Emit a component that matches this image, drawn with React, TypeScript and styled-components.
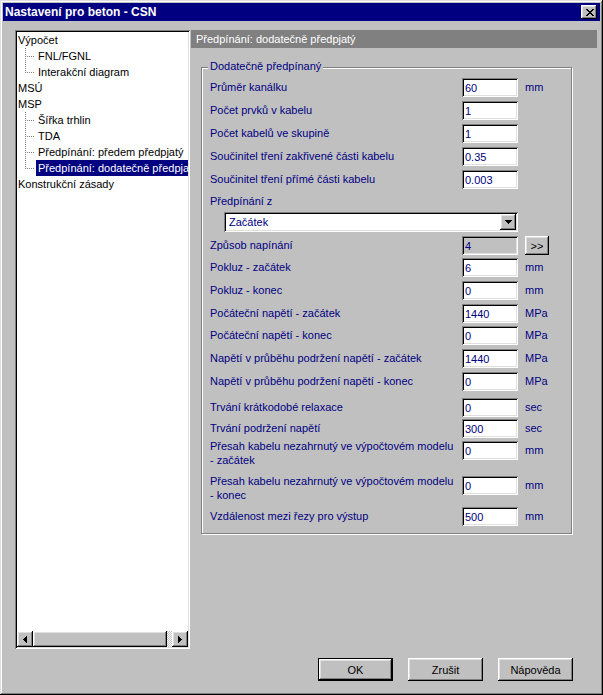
import React from 'react';
import styled, { createGlobalStyle, css } from 'styled-components';

const Global = createGlobalStyle`
  html, body { margin: 0; padding: 0; background: #c0c0c0; }
  body { font-family: "Liberation Sans", Arial, sans-serif; font-size: 11px; }
  * { box-sizing: border-box; }
`;

const raised = css`
  background: #c0c0c0;
  box-shadow: inset -1px -1px #000, inset 1px 1px #fff, inset -2px -2px #808080, inset 2px 2px #dfdfdf;
`;

const sunken = css`
  box-shadow: inset 1px 1px #808080, inset -1px -1px #fff, inset 2px 2px #000, inset -2px -2px #dfdfdf;
`;

const Window = styled.div`
  width: 603px;
  height: 695px;
  padding: 3px;
  background: #c0c0c0;
  display: flex;
  flex-direction: column;
  box-shadow: inset -1px -1px #000, inset 1px 1px #dfdfdf, inset -2px -2px #808080, inset 2px 2px #fff;
`;

const TitleBar = styled.div`
  height: 18px;
  flex: none;
  background: #000080;
  color: #fff;
  font-weight: bold;
  font-size: 12px;
  display: flex;
  align-items: center;
  justify-content: space-between;
  padding: 0 3px 0 2px;
`;

const CloseButton = styled.div`
  ${raised};
  width: 16px;
  height: 14px;
  display: flex;
  align-items: center;
  justify-content: center;
  padding-left: 1px;
`;

const Main = styled.div`
  display: flex;
  padding: 9px 0 0 12px;
`;

const Tree = styled.div`
  width: 175px;
  height: 619px;
  background: #fff;
  ${sunken};
  padding: 2px;
  display: flex;
  flex-direction: column;
`;

const TreeList = styled.div`
  flex: 1;
  overflow: hidden;
  white-space: nowrap;
`;

const TreeRow = styled.div`
  height: 16px;
  display: flex;
  align-items: center;
`;

const Connector = styled.div<{ $last?: boolean }>`
  width: 19px;
  height: 16px;
  flex: none;
  position: relative;
  &::before {
    content: '';
    position: absolute;
    left: 8px;
    top: 0;
    width: 1px;
    height: ${p => (p.$last ? 9 : 16)}px;
    background-image: repeating-linear-gradient(to bottom, #808080 0 1px, transparent 1px 2px);
  }
  &::after {
    content: '';
    position: absolute;
    left: 10px;
    top: 8px;
    width: 8px;
    height: 1px;
    background-image: repeating-linear-gradient(to right, #808080 0 1px, transparent 1px 2px);
  }
`;

const TreeLabel = styled.span<{ $selected?: boolean; $child?: boolean }>`
  display: block;
  height: 16px;
  line-height: 16px;
  padding: 0 2px 0 ${p => (p.$child ? 2 : 1)}px;
  color: ${p => (p.$selected ? '#fff' : '#000')};
  background: ${p => (p.$selected ? '#000080' : 'transparent')};
`;

const HScroll = styled.div`
  height: 16px;
  flex: none;
  display: flex;
`;

const ScrollArrow = styled.div`
  ${raised};
  width: 16px;
  height: 16px;
  flex: none;
  display: flex;
  align-items: center;
  justify-content: center;
`;

const ScrollTrack = styled.div`
  flex: 1;
  display: flex;
  background: repeating-conic-gradient(#fff 0 25%, #c0c0c0 0 50%) 0 0 / 2px 2px;
`;

const ScrollThumb = styled.div`
  ${raised};
  width: calc(100% - 5px);
  height: 16px;
`;

const Panel = styled.div`
  width: 406px;
  margin-left: 1px;
  display: flex;
  flex-direction: column;
`;

const PanelHeader = styled.div`
  height: 18px;
  line-height: 18px;
  background: #808080;
  color: #fff;
  padding-left: 5px;
`;

const GroupBox = styled.div`
  position: relative;
  width: 371px;
  margin: 19px 0 0 10px;
  border: 1px solid #808080;
  box-shadow: inset 1px 1px #fff, 1px 1px #fff;
  padding: 10px 0 0 8px;
`;

const Legend = styled.span`
  position: absolute;
  top: -8px;
  left: 6px;
  line-height: 13px;
  padding: 0 2px;
  background: #c0c0c0;
  color: #000080;
`;

const FieldRow = styled.div<{ $h: number }>`
  height: ${p => p.$h}px;
  display: grid;
  grid-template-columns: 252px 56px auto;
  align-items: start;
`;

const FieldLabel = styled.div<{ $multi?: boolean }>`
  color: #000080;
  white-space: pre-line;
  line-height: ${p => (p.$multi ? 14 : 19)}px;
  margin-top: ${p => (p.$multi ? -2 : 0)}px;
`;

const TextBox = styled.input<{ $disabled?: boolean }>`
  width: 56px;
  height: 19px;
  border: none;
  outline: none;
  padding: 0 3px;
  margin: 0;
  font-family: "Liberation Sans", Arial, sans-serif;
  font-size: 11px;
  color: #000080;
  background: ${p => (p.$disabled ? '#c0c0c0' : '#fff')};
  ${sunken};
`;

const Unit = styled.div`
  color: #000080;
  line-height: 19px;
  margin-left: 7px;
`;

const SmallButton = styled.div`
  ${raised};
  width: 24px;
  height: 19px;
  margin-left: 7px;
  display: flex;
  align-items: center;
  justify-content: center;
  color: #000;
`;

const ComboRow = styled.div<{ $h: number }>`
  height: ${p => p.$h}px;
  padding-left: 14px;
`;

const Combo = styled.div`
  width: 294px;
  height: 20px;
  background: #fff;
  ${sunken};
  padding: 2px;
  display: flex;
  align-items: center;
`;

const ComboText = styled.span`
  flex: 1;
  padding-left: 3px;
  color: #000080;
`;

const ComboButton = styled.div`
  ${raised};
  width: 16px;
  height: 16px;
  display: flex;
  align-items: center;
  justify-content: center;
`;

const Footer = styled.div`
  display: flex;
  justify-content: flex-end;
  gap: 15px;
  margin-top: 9px;
  padding-right: 27px;
`;

const DialogButton = styled.div<{ $default?: boolean }>`
  width: 75px;
  height: 23px;
  display: flex;
  align-items: center;
  justify-content: center;
  color: #000;
  background: #c0c0c0;
  box-shadow: ${p =>
    p.$default
      ? 'inset 0 0 0 1px #000, inset -2px -2px #000, inset 2px 2px #fff, inset -3px -3px #808080, inset 3px 3px #dfdfdf'
      : 'inset -1px -1px #000, inset 1px 1px #fff, inset -2px -2px #808080, inset 2px 2px #dfdfdf'};
`;

const closeGlyph = ['XX....XX', '.XX..XX.', '..XXXX..', '...XX...', '..XXXX..', '.XX..XX.', 'XX....XX'];

const CloseIcon = () => (
  <svg width="8" height="7" viewBox="0 0 8 7" shapeRendering="crispEdges">
    {closeGlyph.flatMap((row, y) =>
      row.split('').map((c, x) => (c === 'X' ? <rect key={`${x}-${y}`} x={x} y={y} width="1" height="1" fill="#000" /> : null))
    )}
  </svg>
);

const Triangle = ({ dir }: { dir: 'left' | 'right' | 'down' }) => {
  if (dir === 'down')
    return (
      <svg width="7" height="4" viewBox="0 0 7 4" shapeRendering="crispEdges">
        <path d="M0 0h7v1h-1v1h-1v1h-1v1h-1v-1h-1v-1h-1v-1h-1z" fill="#000" />
      </svg>
    );
  if (dir === 'left')
    return (
      <svg width="4" height="7" viewBox="0 0 4 7" shapeRendering="crispEdges">
        <path d="M4 0v7h-1v-1h-1v-1h-1v-1h-1v-1h1v-1h1v-1h1v-1z" fill="#000" />
      </svg>
    );
  return (
    <svg width="4" height="7" viewBox="0 0 4 7" shapeRendering="crispEdges">
      <path d="M0 0v7h1v-1h1v-1h1v-1h1v-1h-1v-1h-1v-1h-1v-1z" fill="#000" />
    </svg>
  );
};

type TreeNode = { label: string; child?: boolean; last?: boolean; selected?: boolean };

const treeNodes: TreeNode[] = [
  { label: 'Výpočet' },
  { label: 'FNL/FGNL', child: true },
  { label: 'Interakční diagram', child: true, last: true },
  { label: 'MSÚ' },
  { label: 'MSP' },
  { label: 'Šířka trhlin', child: true },
  { label: 'TDA', child: true },
  { label: 'Předpínání: předem předpjatý', child: true },
  { label: 'Předpínání: dodatečně předpjatý', child: true, last: true, selected: true },
  { label: 'Konstrukční zásady' },
];

type Row = {
  kind?: 'field' | 'label' | 'combo';
  label?: string;
  value?: string;
  unit?: string;
  h: number;
  multi?: boolean;
  disabled?: boolean;
  button?: boolean;
};

const rows: Row[] = [
  { label: 'Průměr kanálku', value: '60', unit: 'mm', h: 23 },
  { label: 'Počet prvků v kabelu', value: '1', h: 23 },
  { label: 'Počet kabelů ve skupině', value: '1', h: 23 },
  { label: 'Součinitel tření zakřivené části kabelu', value: '0.35', h: 23 },
  { label: 'Součinitel tření přímé části kabelu', value: '0.003', h: 22 },
  { kind: 'label', label: 'Předpínání z', h: 20 },
  { kind: 'combo', value: 'Začátek', h: 24 },
  { label: 'Způsob napínání', value: '4', disabled: true, button: true, h: 22 },
  { label: 'Pokluz - začátek', value: '6', unit: 'mm', h: 23 },
  { label: 'Pokluz - konec', value: '0', unit: 'mm', h: 23 },
  { label: 'Počáteční napětí - začátek', value: '1440', unit: 'MPa', h: 22 },
  { label: 'Počáteční napětí - konec', value: '0', unit: 'MPa', h: 23 },
  { label: 'Napětí v průběhu podržení napětí - začátek', value: '1440', unit: 'MPa', h: 23 },
  { label: 'Napětí v průběhu podržení napětí - konec', value: '0', unit: 'MPa', h: 26 },
  { label: 'Trvání krátkodobé relaxace', value: '0', unit: 'sec', h: 21 },
  { label: 'Trvání podržení napětí', value: '300', unit: 'sec', h: 22 },
  { label: 'Přesah kabelu nezahrnutý ve výpočtovém modelu\n- začátek', value: '0', unit: 'mm', h: 35, multi: true },
  { label: 'Přesah kabelu nezahrnutý ve výpočtovém modelu\n- konec', value: '0', unit: 'mm', h: 31, multi: true },
  { label: 'Vzdálenost mezi řezy pro výstup', value: '500', unit: 'mm', h: 26 },
];

export default function App() {
  return (
    <>
      <Global />
      <Window>
        <TitleBar>
          <span>Nastavení pro beton - CSN</span>
          <CloseButton>
            <CloseIcon />
          </CloseButton>
        </TitleBar>
        <Main>
          <Tree>
            <TreeList>
              {treeNodes.map(n => (
                <TreeRow key={n.label}>
                  {n.child && <Connector $last={n.last} />}
                  <TreeLabel $child={n.child} $selected={n.selected}>
                    {n.label}
                  </TreeLabel>
                </TreeRow>
              ))}
            </TreeList>
            <HScroll>
              <ScrollArrow>
                <Triangle dir="left" />
              </ScrollArrow>
              <ScrollTrack>
                <ScrollThumb />
              </ScrollTrack>
              <ScrollArrow>
                <Triangle dir="right" />
              </ScrollArrow>
            </HScroll>
          </Tree>
          <Panel>
            <PanelHeader>Předpínání: dodatečně předpjatý</PanelHeader>
            <GroupBox>
              <Legend>Dodatečně předpínaný</Legend>
              {rows.map((r, i) => {
                if (r.kind === 'combo')
                  return (
                    <ComboRow key={i} $h={r.h}>
                      <Combo>
                        <ComboText>{r.value}</ComboText>
                        <ComboButton>
                          <Triangle dir="down" />
                        </ComboButton>
                      </Combo>
                    </ComboRow>
                  );
                return (
                  <FieldRow key={i} $h={r.h}>
                    <FieldLabel $multi={r.multi}>{r.label}</FieldLabel>
                    {r.kind !== 'label' && (
                      <TextBox readOnly value={r.value} $disabled={r.disabled} />
                    )}
                    {r.unit && <Unit>{r.unit}</Unit>}
                    {r.button && <SmallButton>&gt;&gt;</SmallButton>}
                  </FieldRow>
                );
              })}
            </GroupBox>
          </Panel>
        </Main>
        <Footer>
          <DialogButton $default>OK</DialogButton>
          <DialogButton>Zrušit</DialogButton>
          <DialogButton>Nápověda</DialogButton>
        </Footer>
      </Window>
    </>
  );
}
